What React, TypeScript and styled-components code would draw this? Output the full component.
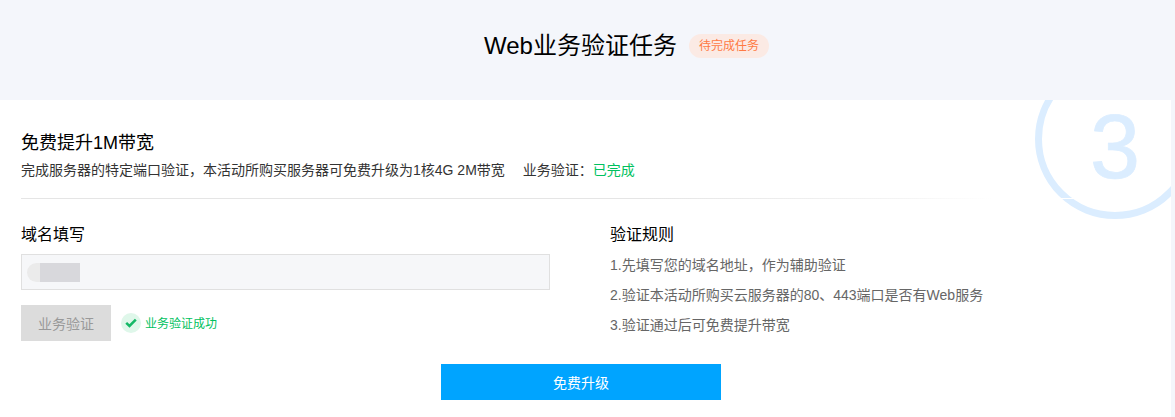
import { createGlobalStyle, styled } from "styled-components";

const GlobalStyle = createGlobalStyle`
  html, body {
    margin: 0;
    padding: 0;
    background: #f4f6fb;
    font-family: "Liberation Sans", "Noto Sans CJK SC", sans-serif;
  }
`;

const Page = styled.div`
  width: 1175px;
  height: 417px;
  overflow: hidden;
`;

const Header = styled.header`
  height: 100px;
  display: flex;
  align-items: center;
  gap: 12px;
  padding: 0 0 8px 484px;
  box-sizing: border-box;
`;

const PageTitle = styled.h1`
  margin: 0;
  font-size: 24px;
  font-weight: 400;
  line-height: 32px;
  color: #000;
`;

const Badge = styled.span`
  width: 80px;
  height: 24px;
  border-radius: 12px;
  background: #fbeae4;
  color: #ff7a45;
  font-size: 12px;
  line-height: 24px;
  text-align: center;
`;

const Panel = styled.main`
  position: relative;
  width: 1171px;
  height: 317px;
  padding: 31px 21px 0;
  box-sizing: border-box;
  background: #fff;
`;

const RingClip = styled.div`
  position: absolute;
  inset: 0;
  overflow: hidden;
`;

const StepRing = styled.div`
  position: absolute;
  left: 1035px;
  top: -41px;
  width: 160px;
  height: 160px;
  box-sizing: border-box;
  border: 7px solid #dbedff;
  border-radius: 50%;
`;

const StepNumber = styled.div`
  position: absolute;
  left: 1085px;
  top: -4px;
  width: 60px;
  color: #dbedff;
  font-size: 90px;
  line-height: 103px;
  text-align: center;
  -webkit-text-stroke: 0.7px #dbedff;
`;

const Content = styled.div`
  position: relative;
`;

const SectionTitle = styled.h2`
  margin: 0;
  font-size: 18px;
  font-weight: 400;
  line-height: 24px;
  color: #000;
`;

const Intro = styled.p`
  display: flex;
  gap: 18px;
  margin: 5px 0 0;
  font-size: 14px;
  line-height: 20px;
  color: #333;
`;

const Done = styled.span`
  color: #00c15e;
`;

const Divider = styled.hr`
  margin: 18px 0 0;
  width: 1129px;
  height: 1px;
  border: 0;
  background: linear-gradient(90deg, #e5e5e5 0, #e5e5e5 55%, #f4f4f4 78%, #fff 86%);
`;

const Columns = styled.div`
  display: flex;
  gap: 60px;
  margin-top: 25px;
`;

const FormColumn = styled.section`
  width: 529px;
`;

const RulesColumn = styled.section`
  flex: 1;
`;

const ColumnTitle = styled.h3`
  margin: 0;
  font-size: 16px;
  font-weight: 400;
  line-height: 22px;
  color: #000;
`;

const DomainInput = styled.div`
  display: flex;
  align-items: center;
  height: 36px;
  margin-top: 8px;
  padding-left: 5px;
  box-sizing: border-box;
  background: #f6f7f9;
  border: 1px solid #e0e0e0;
`;

const BlurredValue = styled.div`
  width: 53px;
  height: 19px;
  border-radius: 10px 0 0 10px;
  background: linear-gradient(90deg, #ebebeb 0 13px, #d8d8dc 13px);
`;

const VerifyRow = styled.div`
  display: flex;
  align-items: center;
  margin-top: 15px;
`;

const VerifyButton = styled.button`
  width: 90px;
  height: 36px;
  padding: 0;
  border: 0;
  background: #dcdcdc;
  color: #999;
  font: inherit;
  font-size: 14px;
`;

const SuccessIcon = styled.span`
  display: flex;
  align-items: center;
  justify-content: center;
  width: 20px;
  height: 20px;
  margin-left: 10px;
  border-radius: 50%;
  background: #dff7ea;
`;

const SuccessText = styled.span`
  margin: 0 0 2px 4px;
  font-size: 12px;
  color: #00c15e;
`;

const RuleList = styled.div`
  display: flex;
  flex-direction: column;
  gap: 10px;
  margin-top: 9px;
`;

const Rule = styled.div`
  font-size: 14px;
  line-height: 20px;
  color: #666;
`;

const Footer = styled.div`
  display: flex;
  justify-content: center;
  padding-right: 9px;
  margin-top: 23px;
`;

const UpgradeButton = styled.button`
  width: 280px;
  height: 36px;
  padding: 0;
  border: 0;
  background: #00a4ff;
  color: #fff;
  font: inherit;
  font-size: 14px;
`;

const rules = [
  "1.先填写您的域名地址，作为辅助验证",
  "2.验证本活动所购买云服务器的80、443端口是否有Web服务",
  "3.验证通过后可免费提升带宽",
];

export default function App() {
  return (
    <Page>
      <GlobalStyle />
      <Header>
        <PageTitle>Web业务验证任务</PageTitle>
        <Badge>待完成任务</Badge>
      </Header>
      <Panel>
        <RingClip>
          <StepRing />
        </RingClip>
        <StepNumber>3</StepNumber>
        <Content>
          <SectionTitle>免费提升1M带宽</SectionTitle>
          <Intro>
            <span>完成服务器的特定端口验证，本活动所购买服务器可免费升级为1核4G 2M带宽</span>
            <span>
              业务验证：<Done>已完成</Done>
            </span>
          </Intro>
          <Divider />
          <Columns>
            <FormColumn>
              <ColumnTitle>域名填写</ColumnTitle>
              <DomainInput>
                <BlurredValue />
              </DomainInput>
              <VerifyRow>
                <VerifyButton disabled>业务验证</VerifyButton>
                <SuccessIcon>
                  <svg width="12" height="10" viewBox="0 0 12 10" fill="none">
                    <path d="M1.2 4.8 L4.5 8 L10.8 1.6" stroke="#14b866" strokeWidth="2.5" />
                  </svg>
                </SuccessIcon>
                <SuccessText>业务验证成功</SuccessText>
              </VerifyRow>
            </FormColumn>
            <RulesColumn>
              <ColumnTitle>验证规则</ColumnTitle>
              <RuleList>
                {rules.map((rule) => (
                  <Rule key={rule}>{rule}</Rule>
                ))}
              </RuleList>
            </RulesColumn>
          </Columns>
          <Footer>
            <UpgradeButton>免费升级</UpgradeButton>
          </Footer>
        </Content>
      </Panel>
    </Page>
  );
}
